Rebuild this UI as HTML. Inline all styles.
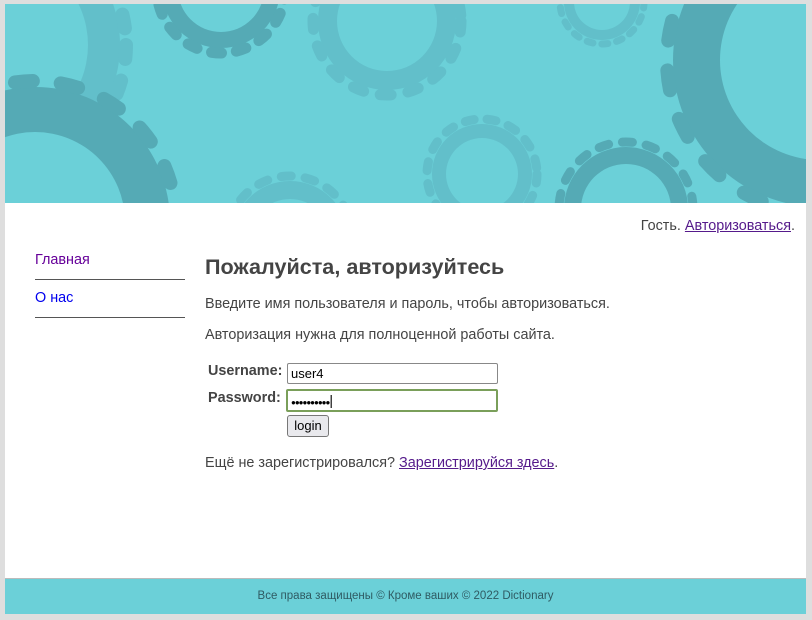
<!DOCTYPE html>
<html><head><meta charset="utf-8"><style>
body{margin:0;background:#dedede;width:812px;height:620px;font-family:"Liberation Sans",sans-serif;overflow:hidden;position:relative}
#page{position:absolute;left:5px;top:4px;width:801px;height:609px;background:#fff}
#hdr{position:absolute;left:0;top:0;width:801px;height:199px;background:#6bd0d8;overflow:hidden}
.t{position:absolute;font-size:14.4px;color:#444;white-space:nowrap}
a{color:#551a8b}
.line{position:absolute;left:30px;width:150px;height:1px;background:#555}
#ftr{position:absolute;left:0;top:574px;width:801px;height:35px;background:#6bd0d8;border-top:1px solid #bbb;text-align:center;font-size:11.5px;color:#2f5b63;line-height:34px}
.inp{position:absolute;left:282px;width:206px;height:19px;border:1px solid #888;border-radius:2px;font-size:13px;line-height:19px;padding-left:3px;color:#000;box-sizing:content-box}
</style></head><body>
<div id="page">
<div id="hdr">
<svg width="801" height="199" viewBox="5 4 801 199" style="position:absolute;left:0;top:0">
<circle cx="-5" cy="45" r="125" fill="#62bfca"/>
<circle cx="-5" cy="45" r="131" fill="none" stroke="#62bfca" stroke-width="14" stroke-dasharray="14 22" stroke-linecap="round"/>
<circle cx="-5" cy="45" r="93" fill="#6bd0d8"/>
<circle cx="35" cy="222" r="135" fill="#55aab5"/>
<circle cx="35" cy="222" r="141" fill="none" stroke="#55aab5" stroke-width="14" stroke-dasharray="18 28" stroke-linecap="round"/>
<circle cx="35" cy="222" r="90" fill="#6bd0d8"/>
<circle cx="221" cy="-11" r="59" fill="#55aab5"/>
<circle cx="221" cy="-11" r="64" fill="none" stroke="#55aab5" stroke-width="11" stroke-dasharray="10 15" stroke-linecap="round"/>
<circle cx="221" cy="-11" r="43" fill="#6bd0d8"/>
<circle cx="387" cy="21" r="69" fill="#62bfca"/>
<circle cx="387" cy="21" r="74" fill="none" stroke="#62bfca" stroke-width="11" stroke-dasharray="11 17" stroke-linecap="round"/>
<circle cx="387" cy="21" r="50" fill="#6bd0d8"/>
<circle cx="602" cy="2" r="38" fill="#62bfca"/>
<circle cx="602" cy="2" r="42" fill="none" stroke="#62bfca" stroke-width="7" stroke-dasharray="6 9" stroke-linecap="round"/>
<circle cx="602" cy="2" r="28" fill="#6bd0d8"/>
<circle cx="290" cy="239" r="58" fill="#62bfca"/>
<circle cx="290" cy="239" r="63" fill="none" stroke="#62bfca" stroke-width="9" stroke-dasharray="10 14" stroke-linecap="round"/>
<circle cx="290" cy="239" r="40" fill="#6bd0d8"/>
<circle cx="482" cy="174" r="50" fill="#62bfca"/>
<circle cx="482" cy="174" r="55" fill="none" stroke="#62bfca" stroke-width="9" stroke-dasharray="9 13" stroke-linecap="round"/>
<circle cx="482" cy="174" r="36" fill="#6bd0d8"/>
<circle cx="626" cy="209" r="62" fill="#55aab5"/>
<circle cx="626" cy="209" r="67" fill="none" stroke="#55aab5" stroke-width="9" stroke-dasharray="10 14" stroke-linecap="round"/>
<circle cx="626" cy="209" r="45" fill="#6bd0d8"/>
<circle cx="820" cy="60" r="147" fill="#55aab5"/>
<circle cx="820" cy="60" r="153" fill="none" stroke="#55aab5" stroke-width="14" stroke-dasharray="20 30" stroke-linecap="round"/>
<circle cx="820" cy="60" r="100" fill="#6bd0d8"/>
</svg>
</div>
<div class="t" style="right:11px;top:214px">Гость. <a href="#">Авторизоваться</a>.</div>
<div class="t" style="left:30px;top:248px;color:#660099">Главная</div>
<div class="line" style="top:275px"></div>
<div class="t" style="left:30px;top:286px;color:#0000ee">О нас</div>
<div class="line" style="top:313px"></div>
<div class="t" style="left:200px;top:250px;font-size:21.6px;font-weight:bold">Пожалуйста, авторизуйтесь</div>
<div class="t" style="left:200px;top:292px">Введите имя пользователя и пароль, чтобы авторизоваться.</div>
<div class="t" style="left:200px;top:323px">Авторизация нужна для полноценной работы сайта.</div>
<div class="t" style="left:203px;top:359px;font-weight:bold">Username:</div>
<div class="t" style="left:203px;top:386px;font-weight:bold">Password:</div>
<div class="inp" style="top:359px">user4</div>
<div class="inp" style="top:385px;border:2px solid #7a9f5a;left:281px;width:205px;font-size:8px;letter-spacing:-1px">●●●●●●●●●●<span style="font-size:14px">|</span></div>
<div style="position:absolute;left:282px;top:411px;width:40px;height:20px;border:1px solid #777;border-radius:3px;background:#e9e9ed;font-size:13px;text-align:center;line-height:20px">login</div>
<div class="t" style="left:200px;top:451px">Ещё не зарегистрировался? <a href="#">Зарегистрируйся здесь</a>.</div>
<div id="ftr">Все права защищены © Кроме ваших © 2022 Dictionary</div>
</div>
</body></html>
